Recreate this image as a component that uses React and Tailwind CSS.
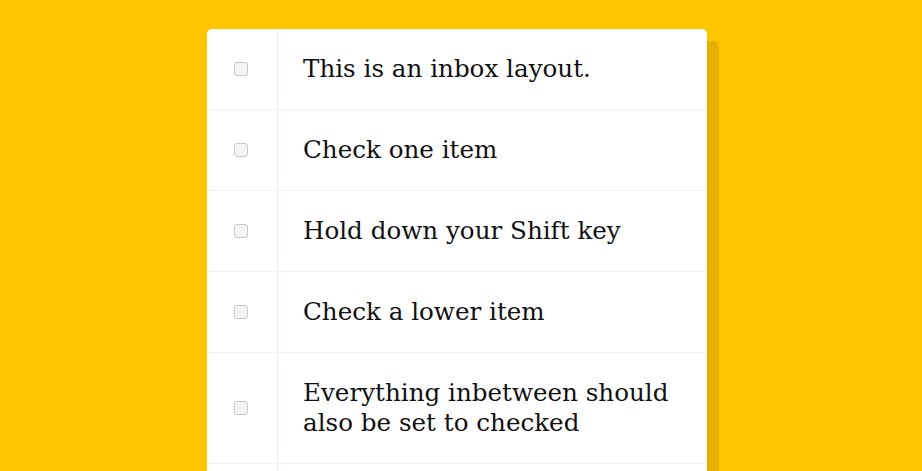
import React from 'react';

const items = [
  'This is an inbox layout.',
  'Check one item',
  'Hold down your Shift key',
  'Check a lower item',
  'Everything inbetween should also be set to checked',
  'Try to do it without any libraries',
  'Just regular JavaScript',
  'Good Luck!',
  "Don't forget to tweet your result!",
];

export default function App() {
  return (
    <div className="min-h-screen bg-[#ffc600] pt-[29px] pb-12 font-['DejaVu_Serif',serif]">
      <div className="ml-[207px] w-[500px] rounded-[5px] bg-white shadow-[12px_12px_0_rgba(0,0,0,0.1)]">
        {items.map((text) => (
          <div key={text} className="flex items-center border-b border-[#f1f1f1] last:border-b-0">
            <div className="flex w-[70px] shrink-0 justify-center pr-[2px]">
              <input
                type="checkbox"
                className="m-0 h-[14px] w-[14px] appearance-none rounded-[3px] border border-[#c8c8c8] bg-[#f4f4f4]"
              />
            </div>
            <p className="m-0 flex-1 border-l border-[#e3ecfd] py-[25px] pl-[25px] pr-[25px] text-[24.6px] leading-[30px] text-[#111]">
              {text}
            </p>
          </div>
        ))}
      </div>
    </div>
  );
}
